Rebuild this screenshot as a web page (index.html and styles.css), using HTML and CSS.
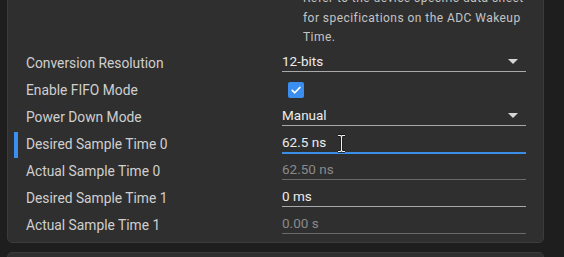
FILE: index.html
```html
<!DOCTYPE html>
<html lang="en">
<head>
    <title>ADC Settings</title>
    <link rel="stylesheet" href="styles.css">
</head>
<body>
    <div class="page">
        <section class="panel">
            <p class="help">Refer to the device specific data sheet<br>for specifications on the ADC Wakeup<br>Time.</p>

            <div class="rows">
                <div class="row">
                    <span class="label">Conversion Resolution</span>
                    <div class="field select">
                        <span>12-bits</span>
                        <span class="caret"></span>
                    </div>
                </div>

                <div class="row">
                    <span class="label">Enable FIFO Mode</span>
                    <div class="check-cell">
                        <span class="checkbox">
                            <svg width="12" height="12" viewBox="0 0 12 12">
                                <path d="M2.2 6.3 L4.8 8.8 L9.9 3.4" fill="none" stroke="#fff" stroke-width="1.6" stroke-linecap="round" stroke-linejoin="round"/>
                            </svg>
                        </span>
                    </div>
                </div>

                <div class="row">
                    <span class="label">Power Down Mode</span>
                    <div class="field select">
                        <span>Manual</span>
                        <span class="caret"></span>
                    </div>
                </div>

                <div class="row active">
                    <span class="label">Desired Sample Time 0</span>
                    <div class="field focused">
                        <span>62.5 ns</span>
                        <svg class="ibeam" width="9" height="19" viewBox="0 0 9 19">
                            <path d="M1 1.5 H3.5 L4.5 2.5 L5.5 1.5 H8 M4.5 2.5 V16.5 M1 17.5 H3.5 L4.5 16.5 L5.5 17.5 H8" fill="none" stroke="#111" stroke-width="2.6"/>
                            <path d="M1 1.5 H3.5 L4.5 2.5 L5.5 1.5 H8 M4.5 2.5 V16.5 M1 17.5 H3.5 L4.5 16.5 L5.5 17.5 H8" fill="none" stroke="#f2f2f2" stroke-width="1.1"/>
                        </svg>
                    </div>
                </div>

                <div class="row">
                    <span class="label">Actual Sample Time 0</span>
                    <div class="field readonly">
                        <span>62.50 ns</span>
                    </div>
                </div>

                <div class="row">
                    <span class="label">Desired Sample Time 1</span>
                    <div class="field">
                        <span>0 ms</span>
                    </div>
                </div>

                <div class="row">
                    <span class="label">Actual Sample Time 1</span>
                    <div class="field readonly">
                        <span>0.00 s</span>
                    </div>
                </div>
            </div>
        </section>

        <section class="panel next"></section>
    </div>
</body>
</html>
```

FILE: styles.css
```css
body {
    margin: 0;
    background-color: #1e1e1e;
    font-family: Roboto, "Noto Sans", sans-serif;
    color: #cfcfcf;
    overflow: hidden;
}

.page {
    padding-left: 7px;
}

.panel {
    width: 537px;
    box-sizing: border-box;
    margin-top: -30px;
    padding: 18px 17px 3px 18px;
    background-color: #2f2f2f;
    border: 1px solid #3b3b3b;
    border-radius: 5px;
}

.panel.next {
    margin-top: 9px;
    height: 60px;
}

.help {
    margin: 0 0 2px 277px;
    font-size: 12px;
    line-height: 19.5px;
    letter-spacing: 0.45px;
    color: #c4c4c4;
}

.rows {
    display: flex;
    flex-direction: column;
}

.row {
    position: relative;
    display: grid;
    grid-template-columns: 256px 244px;
    height: 27px;
    font-size: 13.8px;
}

.row.active::before {
    content: "";
    position: absolute;
    left: -12px;
    top: 1px;
    width: 4px;
    height: 26px;
    background-color: #3a8ef0;
}

.label {
    line-height: 27px;
    color: #cfcfcf;
}

.field {
    position: relative;
    display: flex;
    align-items: center;
    justify-content: space-between;
    height: 22px;
    box-sizing: border-box;
    padding-top: 2px;
    border-bottom: 1px solid #a9a9a9;
    color: #ececec;
    font-size: 13.5px;
}

.field.readonly {
    color: #8a8a8a;
    border-bottom-color: #6a6a6a;
}

.field.focused {
    height: 23px;
    border-bottom: 2px solid #3a8ee8;
}

.caret {
    width: 0;
    height: 0;
    margin-right: 8px;
    border-left: 5px solid transparent;
    border-right: 5px solid transparent;
    border-top: 5px solid #d6d6d6;
}

.check-cell {
    display: flex;
    align-items: center;
    padding-left: 6px;
}

.checkbox {
    display: flex;
    align-items: center;
    justify-content: center;
    width: 16px;
    height: 16px;
    margin-top: -1px;
    border-radius: 2px;
    background-color: #3a8ef0;
}

.ibeam {
    position: absolute;
    left: 55px;
    top: 3px;
}
```
